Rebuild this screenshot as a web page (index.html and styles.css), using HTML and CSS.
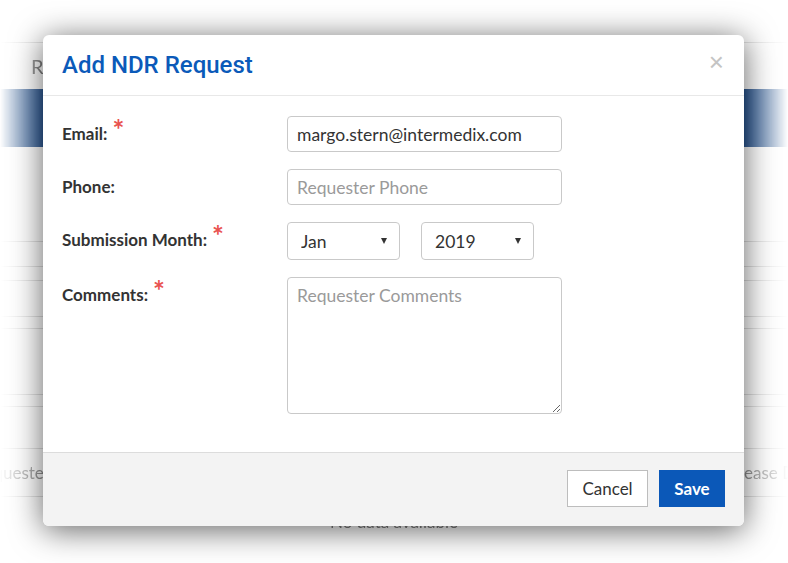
FILE: index.html
```html
<!DOCTYPE html>
<html lang="en">
<head>
    <meta charset="UTF-8">
    <meta name="viewport" content="width=device-width, initial-scale=1.0">
    <title>Add NDR Request</title>
    <link rel="stylesheet" href="styles.css">
</head>
<body>
    <!-- page behind the dialog -->
    <div class="backdrop">
        <div class="backdrop-fade">
            <div class="bg-head"></div>
            <div class="bg-tabs">R</div>
            <div class="bg-band"></div>
            <div class="bg-row" style="height: 95px"></div>
            <div class="bg-row" style="height: 25px"></div>
            <div class="bg-row" style="height: 14px"></div>
            <div class="bg-row" style="height: 36px"></div>
            <div class="bg-row" style="height: 12px"></div>
            <div class="bg-row" style="height: 66px"></div>
            <div class="bg-row" style="height: 12px"></div>
            <div class="bg-row" style="height: 42px"></div>
            <div class="bg-row bg-thead">
                <span class="bg-col-first">Requester</span>
                <span class="bg-col-last">Release Date</span>
            </div>
            <div class="bg-empty">No data available</div>
        </div>
    </div>

    <div class="modal">
        <div class="modal-header">
            <h1 class="modal-title">Add NDR Request</h1>
            <span class="modal-close">&times;</span>
        </div>

        <form class="modal-body">
            <label class="form-label" for="email">Email:<span class="req">*</span></label>
            <input class="form-input" id="email" type="text" value="margo.stern@intermedix.com">

            <label class="form-label" for="phone">Phone:</label>
            <input class="form-input" id="phone" type="text" placeholder="Requester Phone">

            <label class="form-label" for="month">Submission Month:<span class="req">*</span></label>
            <div class="select-group">
                <div class="select-wrap">
                    <select id="month" class="form-select">
                        <option>Jan</option>
                        <option>Feb</option>
                        <option>Mar</option>
                    </select>
                </div>
                <div class="select-wrap">
                    <select id="year" class="form-select">
                        <option>2019</option>
                        <option>2018</option>
                    </select>
                </div>
            </div>

            <label class="form-label" for="comments">Comments:<span class="req">*</span></label>
            <textarea class="form-textarea" id="comments" placeholder="Requester Comments"></textarea>
        </form>

        <div class="modal-footer">
            <button class="btn btn-default" type="button">Cancel</button>
            <button class="btn btn-primary" type="button">Save</button>
        </div>
    </div>
</body>
</html>
```

FILE: styles.css
```css
/* General Page Styles */
body {
    font-family: 'Lato', 'Open Sans', sans-serif;
    margin: 0;
    padding: 35px 0 0 43px;
    background: #ffffff;
    color: #333;
    min-height: 100vh;
    box-sizing: border-box;
    position: relative;
    overflow: hidden;
}

/* Faded page behind the dialog */
.backdrop {
    position: absolute;
    top: 0;
    left: 0;
    right: 0;
    bottom: 0;
    overflow: hidden;
    -webkit-mask-image: linear-gradient(to right, transparent 0, #000 44px, #000 744px, transparent 788px);
    mask-image: linear-gradient(to right, transparent 0, #000 44px, #000 744px, transparent 788px);
}

.backdrop-fade {
    height: 100%;
    overflow: hidden;
    -webkit-mask-image: linear-gradient(to bottom, transparent 0, #000 30px, #000 525px, transparent 563px);
    mask-image: linear-gradient(to bottom, transparent 0, #000 30px, #000 525px, transparent 563px);
}

.bg-head {
    height: 42px;
    border-bottom: 1px solid #e2e2e2;
}

.bg-tabs {
    height: 46px;
    line-height: 46px;
    padding-left: 31px;
    font-size: 20px;
    color: #777;
}

.bg-band {
    height: 58px;
    background: #2b5893;
}

.bg-row {
    box-sizing: border-box;
    border-bottom: 1px solid #dcdcdc;
}

.bg-thead {
    height: 48px;
    display: flex;
    align-items: center;
    font-size: 17px;
    color: #8a8a8a;
    white-space: nowrap;
    overflow: hidden;
}

.bg-col-first {
    width: 50px;
    flex-shrink: 0;
    display: flex;
    justify-content: flex-end;
    overflow: hidden;
}

.bg-col-last {
    margin-left: 671px;
}

.bg-empty {
    text-align: center;
    font-size: 17px;
    color: #777;
    padding-top: 14px;
}

/* Dialog */
.modal {
    position: relative;
    width: 701px;
    height: 491px;
    background: #fff;
    border-radius: 6px;
    overflow: hidden;
    box-shadow: 0 4px 32px rgba(0, 0, 0, 0.62);
    display: flex;
    flex-direction: column;
}

.modal-header {
    height: 60px;
    padding: 0 19px;
    border-bottom: 1px solid #e8e8e8;
    display: flex;
    align-items: center;
    justify-content: space-between;
}

.modal-title {
    margin: 0;
    font-family: 'Roboto', sans-serif;
    font-weight: 500;
    font-size: 24px;
    color: #0b5ab9;
}

.modal-close {
    font-family: 'Liberation Sans', sans-serif;
    font-size: 26px;
    color: #c4c4c4;
    margin-top: -6px;
    margin-right: 1px;
}

/* Form */
.modal-body {
    flex: 1;
    padding: 20px 19px 0;
    display: grid;
    grid-template-columns: 225px 275px;
    grid-auto-rows: min-content;
    row-gap: 17px;
}

.form-label {
    font-weight: 700;
    font-size: 17px;
    line-height: 36px;
    color: #333;
}

.req {
    color: #e9524f;
    font-size: 28px;
    font-weight: 700;
    line-height: 0;
    margin-left: 5px;
    position: relative;
    top: 0;
}

.form-input,
.form-textarea,
.form-select {
    font-family: 'Lato', sans-serif;
    font-size: 17.5px;
    color: #333;
    border: 1px solid #c9c9c9;
    border-radius: 4px;
    background: #fff;
    box-sizing: border-box;
    outline: none;
}

.form-input {
    height: 36px;
    padding: 0 9px;
}

.form-input::placeholder,
.form-textarea::placeholder {
    color: #9a9a9a;
}

.select-group {
    display: flex;
    gap: 21px;
}

.select-wrap {
    position: relative;
}

.select-wrap::after {
    content: "";
    position: absolute;
    right: 13px;
    top: 16px;
    border-left: 3.5px solid transparent;
    border-right: 3.5px solid transparent;
    border-top: 6px solid #333;
    pointer-events: none;
}

.form-select {
    width: 113px;
    height: 38px;
    padding: 0 13px;
    appearance: none;
    -webkit-appearance: none;
}

.form-textarea {
    height: 137px;
    padding: 7px 9px;
    resize: vertical;
}

/* Footer */
.modal-footer {
    height: 74px;
    box-sizing: border-box;
    padding: 17px 19px 0;
    background: #f3f3f3;
    border-top: 1px solid #dcdcdc;
    display: flex;
    justify-content: flex-end;
    align-items: flex-start;
    gap: 11px;
}

.btn {
    height: 37px;
    font-family: 'Lato', sans-serif;
    font-size: 17px;
    border-radius: 0;
    cursor: pointer;
}

.btn-default {
    width: 81px;
    background: #fff;
    color: #333;
    border: 1px solid #bdbdbd;
}

.btn-primary {
    width: 66px;
    background: #0b58b8;
    color: #fff;
    font-weight: 700;
    border: none;
}
```
